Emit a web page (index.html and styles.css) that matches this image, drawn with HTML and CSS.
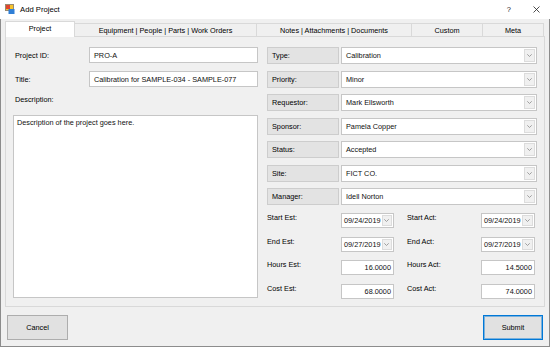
FILE: index.html
```html
<!DOCTYPE html>
<html>
<head>
<meta charset="utf-8">
<title>Add Project</title>
<link rel="stylesheet" href="styles.css">
</head>
<body>
<div class="window">
  <div class="titlebar">
    <svg class="app-icon" viewBox="0 0 10 10" width="10" height="10">
      <rect x="0.5" y="0.5" width="8" height="6" fill="#f6c42c" stroke="#9a8a70" stroke-width="1"/>
      <rect x="1" y="1" width="4" height="4" fill="#e0452c"/>
      <rect x="3.5" y="5" width="6" height="5" fill="#2f7fd6"/>
    </svg>
    <span class="title">Add Project</span>
    <span class="help">?</span>
    <svg class="close" viewBox="0 0 7 7" width="7" height="7">
      <path d="M0.5 0.5 L6.5 6.5 M6.5 0.5 L0.5 6.5" stroke="#222" stroke-width="0.8" fill="none"/>
    </svg>
  </div>
  <div class="client">
    <div class="tabs">
      <div class="tab active t-project">Project</div>
      <div class="tab t-equip">Equipment | People | Parts | Work Orders</div>
      <div class="tab t-notes">Notes | Attachments | Documents</div>
      <div class="tab t-custom">Custom</div>
      <div class="tab t-meta">Meta</div>
    </div>
    <div class="tabpage">
      <div class="left">
        <div class="field first">
          <label>Project ID:</label>
          <div class="textbox">PRO-A</div>
        </div>
        <div class="field second">
          <label>Title:</label>
          <div class="textbox">Calibration for SAMPLE-034 - SAMPLE-077</div>
        </div>
        <div class="desc-label">Description:</div>
        <div class="textarea">Description of the project goes here.</div>
      </div>
      <div class="right">
        <div class="combos">
          <div class="crow"><div class="lbl-box">Type:</div><div class="combo"><span class="val">Calibration</span><span class="arrow"><svg viewBox="0 0 5 3" width="5" height="3"><path d="M0.3 0.3 L2.5 2.5 L4.7 0.3" stroke="#8a8a8a" stroke-width="0.8" fill="none"/></svg></span></div></div>
          <div class="crow"><div class="lbl-box">Priority:</div><div class="combo"><span class="val">Minor</span><span class="arrow"><svg viewBox="0 0 5 3" width="5" height="3"><path d="M0.3 0.3 L2.5 2.5 L4.7 0.3" stroke="#8a8a8a" stroke-width="0.8" fill="none"/></svg></span></div></div>
          <div class="crow"><div class="lbl-box">Requestor:</div><div class="combo"><span class="val">Mark Ellsworth</span><span class="arrow"><svg viewBox="0 0 5 3" width="5" height="3"><path d="M0.3 0.3 L2.5 2.5 L4.7 0.3" stroke="#8a8a8a" stroke-width="0.8" fill="none"/></svg></span></div></div>
          <div class="crow"><div class="lbl-box">Sponsor:</div><div class="combo"><span class="val">Pamela Copper</span><span class="arrow"><svg viewBox="0 0 5 3" width="5" height="3"><path d="M0.3 0.3 L2.5 2.5 L4.7 0.3" stroke="#8a8a8a" stroke-width="0.8" fill="none"/></svg></span></div></div>
          <div class="crow"><div class="lbl-box">Status:</div><div class="combo"><span class="val">Accepted</span><span class="arrow"><svg viewBox="0 0 5 3" width="5" height="3"><path d="M0.3 0.3 L2.5 2.5 L4.7 0.3" stroke="#8a8a8a" stroke-width="0.8" fill="none"/></svg></span></div></div>
          <div class="crow"><div class="lbl-box">Site:</div><div class="combo"><span class="val">FICT CO.</span><span class="arrow"><svg viewBox="0 0 5 3" width="5" height="3"><path d="M0.3 0.3 L2.5 2.5 L4.7 0.3" stroke="#8a8a8a" stroke-width="0.8" fill="none"/></svg></span></div></div>
          <div class="crow"><div class="lbl-box">Manager:</div><div class="combo"><span class="val">Idell Norton</span><span class="arrow"><svg viewBox="0 0 5 3" width="5" height="3"><path d="M0.3 0.3 L2.5 2.5 L4.7 0.3" stroke="#8a8a8a" stroke-width="0.8" fill="none"/></svg></span></div></div>
        </div>
        <div class="dates">
          <div class="dlabel">Start Est:</div>
          <div class="dbox"><span class="val">09/24/2019</span><span class="arrow"><svg viewBox="0 0 5 3" width="5" height="3"><path d="M0.3 0.3 L2.5 2.5 L4.7 0.3" stroke="#8a8a8a" stroke-width="0.8" fill="none"/></svg></span></div>
          <div></div>
          <div class="dlabel">Start Act:</div>
          <div class="dbox"><span class="val">09/24/2019</span><span class="arrow"><svg viewBox="0 0 5 3" width="5" height="3"><path d="M0.3 0.3 L2.5 2.5 L4.7 0.3" stroke="#8a8a8a" stroke-width="0.8" fill="none"/></svg></span></div>

          <div class="dlabel">End Est:</div>
          <div class="dbox"><span class="val">09/27/2019</span><span class="arrow"><svg viewBox="0 0 5 3" width="5" height="3"><path d="M0.3 0.3 L2.5 2.5 L4.7 0.3" stroke="#8a8a8a" stroke-width="0.8" fill="none"/></svg></span></div>
          <div></div>
          <div class="dlabel">End Act:</div>
          <div class="dbox"><span class="val">09/27/2019</span><span class="arrow"><svg viewBox="0 0 5 3" width="5" height="3"><path d="M0.3 0.3 L2.5 2.5 L4.7 0.3" stroke="#8a8a8a" stroke-width="0.8" fill="none"/></svg></span></div>

          <div class="dlabel">Hours Est:</div>
          <div class="dbox num">16.0000</div>
          <div></div>
          <div class="dlabel">Hours Act:</div>
          <div class="dbox num">14.5000</div>

          <div class="dlabel">Cost Est:</div>
          <div class="dbox num">68.0000</div>
          <div></div>
          <div class="dlabel">Cost Act:</div>
          <div class="dbox num">74.0000</div>
        </div>
      </div>
    </div>
    <div class="buttons">
      <button class="btn">Cancel</button>
      <button class="btn primary">Submit</button>
    </div>
  </div>
</div>
</body>
</html>
```

FILE: styles.css
```css
* {
  box-sizing: border-box;
  margin: 0;
  padding: 0;
}

html, body {
  width: 550px;
  height: 347px;
  overflow: hidden;
}

body {
  background: #f0f0f0;
  font-family: "Liberation Sans", Arial, sans-serif;
  font-size: 7.3px;
  color: #000;
}

.window {
  width: 550px;
  height: 347px;
  border: 1px solid #8c8c8c;
  border-top: none;
  display: flex;
  flex-direction: column;
  background: #f0f0f0;
}

.titlebar {
  height: 19px;
  margin: 0 -1px;
  background: #fff;
  display: flex;
  align-items: center;
  padding-left: 5px;
}

.app-icon {
  width: 10px;
  height: 10px;
  margin-right: 5px;
  margin-top: -1px;
}

.title {
  flex: 1;
  font-size: 7.7px;
  color: #000;
}

.help {
  font-size: 7.5px;
  margin-right: 22px;
  color: #222;
}

.close {
  width: 7px;
  height: 7px;
  margin-right: 10px;
}

.client {
  flex: 1;
  display: flex;
  flex-direction: column;
  padding: 0 4px;
}

.tabs {
  display: flex;
  align-items: flex-end;
  height: 17px;
}

.tab {
  height: 13px;
  border: 1px solid #d9d9d9;
  border-bottom: none;
  background: #f0f0f0;
  text-align: center;
  padding-top: 2px;
  line-height: 10px;
  margin-left: -1px;
  white-space: nowrap;
  color: #000;
}

.tab.active {
  height: 16px;
  margin-left: 0;
  margin-bottom: -1px;
  background: #fff;
  position: relative;
  z-index: 1;
  padding-top: 2px;
  line-height: 10px;
}

.t-project { width: 70px; }
.t-equip { width: 183px; }
.t-notes { width: 156px; }
.t-custom { width: 72px; }
.t-meta { width: 62px; }

.tabpage {
  height: 271px;
  border: 1px solid #d9d9d9;
  display: flex;
  gap: 9px;
  padding: 10px 7px 8px 7px;
}

.left {
  width: 245px;
  display: flex;
  flex-direction: column;
}

.field {
  display: flex;
  align-items: center;
  height: 16px;
}

.field.first {
  margin-bottom: 8px;
}

.field.second {
  margin-bottom: 6px;
}

.field label {
  width: 76px;
  padding-left: 2px;
}

.textbox {
  width: 169px;
  height: 16px;
  background: #fff;
  border: 1px solid #c6c6c6;
  padding-left: 4px;
  display: flex;
  align-items: center;
  color: #111;
}

.desc-label {
  height: 14px;
  line-height: 14px;
  padding-left: 2px;
  margin-bottom: 8px;
}

.textarea {
  flex: 1;
  background: #fff;
  border: 1px solid #c6c6c6;
  padding: 2px 3px;
  line-height: 9px;
  color: #111;
}

.right {
  width: 270px;
  display: flex;
  flex-direction: column;
}

.combos {
  display: flex;
  flex-direction: column;
  gap: 6.5px;
}

.crow {
  display: flex;
  height: 17px;
  gap: 2px;
}

.lbl-box {
  width: 72px;
  background: #e3e3e3;
  border: 1px solid #cdcdcd;
  padding-left: 4px;
  display: flex;
  align-items: center;
}

.combo {
  width: 196px;
  background: #fff;
  border: 1px solid #c6c6c6;
  display: flex;
  align-items: center;
  padding-left: 4px;
  color: #111;
}

.val {
  flex: 1;
  white-space: nowrap;
}

.arrow {
  width: 11px;
  align-self: stretch;
  margin: 1px;
  border: 1px solid #dcdcdc;
  background: #f0f0f0;
  display: flex;
  align-items: center;
  justify-content: center;
}

.dates {
  margin-top: 8px;
  display: grid;
  grid-template-columns: 74px 53px 13px 74px 54px;
  grid-auto-rows: 15px;
  row-gap: 8.5px;
}

.dlabel {
  line-height: 10px;
}

.dbox {
  background: #fff;
  border: 1px solid #c6c6c6;
  display: flex;
  align-items: center;
  padding-left: 2px;
  color: #111;
}

.dbox.num {
  justify-content: flex-end;
  padding-right: 2px;
}

.buttons {
  display: flex;
  justify-content: space-between;
  padding: 0 2px;
  margin-top: 8px;
}

.btn {
  width: 61px;
  height: 25px;
  background: #e1e1e1;
  border: 1px solid #adadad;
  font-family: inherit;
  font-size: 7.3px;
  color: #000;
}

.btn.primary {
  width: 60px;
  border: 1px solid #0078d7;
  box-shadow: inset 0 0 0 1px rgba(0, 120, 215, 0.45);
}
```
